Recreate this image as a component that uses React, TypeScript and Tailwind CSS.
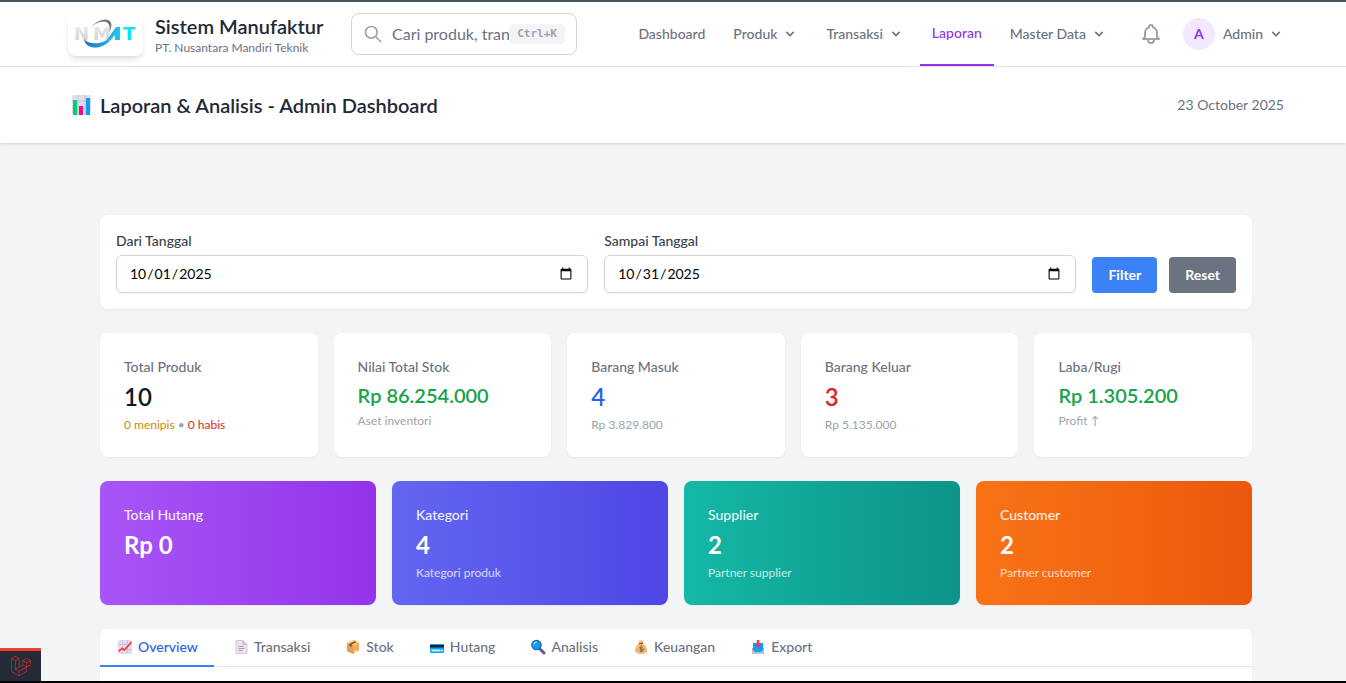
import type { ReactNode } from 'react';
import { SiLaravel } from 'react-icons/si';

function Chevron() {
  return (
    <svg className="size-4" viewBox="0 0 20 20" fill="currentColor" aria-hidden="true">
      <path
        fillRule="evenodd"
        clipRule="evenodd"
        d="M5.293 7.293a1 1 0 011.414 0L10 10.586l3.293-3.293a1 1 0 111.414 1.414l-4 4a1 1 0 01-1.414 0l-4-4a1 1 0 010-1.414z"
      />
    </svg>
  );
}

function Logo() {
  return (
    <svg className="h-8 w-16" viewBox="0 0 64 32" role="img" aria-label="NMT">
      <defs>
        <linearGradient id="silver" x1="0" y1="0" x2="0" y2="1">
          <stop offset="0" stopColor="#f1f1f2" />
          <stop offset="0.5" stopColor="#dadbdd" />
          <stop offset="1" stopColor="#cfd0d3" />
        </linearGradient>
        <linearGradient id="cyan" x1="0" y1="0" x2="0" y2="1">
          <stop offset="0" stopColor="#04ecf8" />
          <stop offset="1" stopColor="#0adcf4" />
        </linearGradient>
        <linearGradient id="blade" x1="0" y1="0" x2="1" y2="0">
          <stop offset="0" stopColor="#2c9fdc" />
          <stop offset="1" stopColor="#14cdf0" />
        </linearGradient>
        <linearGradient id="ringTop" x1="0" y1="1" x2="1" y2="0">
          <stop offset="0" stopColor="#d8d8da" />
          <stop offset="0.5" stopColor="#a4a5a8" />
          <stop offset="1" stopColor="#55575b" />
        </linearGradient>
        <linearGradient id="ringBottom" x1="0" y1="0" x2="1" y2="0">
          <stop offset="0" stopColor="#1c6fb8" />
          <stop offset="0.5" stopColor="#2497dc" />
          <stop offset="1" stopColor="#23c3ec" />
        </linearGradient>
      </defs>
      <g fontFamily="DejaVu Sans, sans-serif" fontSize="18" fontWeight="700">
        <text x="0" y="22" fill="url(#silver)">N</text>
        <text x="19" y="22" fill="url(#silver)">M</text>
        <text x="49" y="22" fill="url(#cyan)">T</text>
      </g>
      <path d="M16 11C20 4 29 0 34 2c5 2 4 8 1 13 1-5 1-9-3-11-5-1-11 1-16 7z" fill="url(#ringTop)" />
      <path d="M42 9h4v13h-5v-5l-5 5h-3z" fill="url(#blade)" />
      <path d="M10 21c1 7 8 10 16 8 7-2 13-8 16-16-5 7-11 11-17 12-6 1-12 0-15-4z" fill="url(#ringBottom)" />
    </svg>
  );
}

function BarChartIcon() {
  return (
    <svg className="h-5 w-[27px]" viewBox="0 0 27 20" aria-hidden="true">
      <rect x="4" y="0" width="19" height="20" rx="2" fill="#e5dcee" />
      <path d="M10 0v20M17 0v20M4 6h19M4 13h19" stroke="#c9bcd8" strokeWidth="1" />
      <rect x="5" y="5" width="4" height="15" fill="#00d26a" />
      <rect x="11" y="11" width="4" height="9" fill="#f70a8d" />
      <rect x="18" y="3" width="4" height="17" fill="#00a6ed" />
    </svg>
  );
}

function TabIcon({ children }: { children: ReactNode }) {
  return (
    <svg className="h-4 w-[18px]" viewBox="0 0 18 16" aria-hidden="true">
      {children}
    </svg>
  );
}

const tabs = [
  {
    label: 'Overview',
    icon: (
      <TabIcon>
        <rect x="2" y="1" width="14" height="14" rx="1.500" fill="#e4dcec" />
        <path d="M6.500 1v14M11.500 1v14M2 5.500h14M2 10.500h14" stroke="#c8bcd5" strokeWidth="0.800" />
        <path d="M2.500 12.500L6 9.500l2.500 1.500 7-8" stroke="#f8312f" strokeWidth="1.500" fill="none" />
      </TabIcon>
    ),
  },
  {
    label: 'Transaksi',
    icon: (
      <TabIcon>
        <path d="M4 1.500h7l4 4v9H4z" fill="#e9e2f0" stroke="#d3c9de" />
        <path d="M11 1.500v4h4" fill="#cbbfd9" stroke="#c2b6cf" />
        <path d="M6.500 7.500h5M6.500 9.500h6M6.500 11.500h4" stroke="#a79cb3" />
      </TabIcon>
    ),
  },
  {
    label: 'Stok',
    icon: (
      <TabIcon>
        <path d="M3 4l7-3 5 2.500v8L9 15l-6-3z" fill="#f3ad61" />
        <path d="M3 4l7-3 5 2.500-6 3z" fill="#ffce7c" />
        <path d="M3 4l6 2.500V15l-6-3z" fill="#e39d55" />
        <path d="M5.500 4.800l5.500-2.600 1.500.8-5 2.600v2.400l-2-1z" fill="#7d4533" />
        <path d="M10.500 12l2-1v2l-2 1z" fill="#ffe9bb" />
      </TabIcon>
    ),
  },
  {
    label: 'Hutang',
    icon: (
      <TabIcon>
        <rect x="2" y="5" width="14" height="9" rx="1" fill="#00a6ed" />
        <path d="M2 6h14v2.500H2z" fill="#1c1c32" />
        <path d="M3.500 10.500h9v2h-9z" fill="#d3e9f4" />
        <circle cx="14" cy="11.500" r="1" fill="#f4f4f4" />
      </TabIcon>
    ),
  },
  {
    label: 'Analisis',
    icon: (
      <TabIcon>
        <path d="M10.500 9.500l4.500 4.500" stroke="#635994" strokeWidth="3" strokeLinecap="round" />
        <circle cx="7.500" cy="6" r="4.700" fill="#00a6ed" stroke="#4056a5" strokeWidth="1.200" />
        <path d="M5 5q.5-2 2.500-2" stroke="#a7e2ff" strokeWidth="1.200" fill="none" strokeLinecap="round" />
      </TabIcon>
    ),
  },
  {
    label: 'Keuangan',
    icon: (
      <TabIcon>
        <path d="M6 1.500l2 .5 1-1 1 1 2-.5-1.500 3h-3z" fill="#f6ba6b" />
        <path d="M7 4.500h4c3 2 4 5 4 7s-2 3.500-6 3.500-6-1.500-6-3.500 1-5 4-7z" fill="#f3b86e" />
        <path d="M7 4.500h4" stroke="#8c5543" strokeWidth="1.200" />
        <path d="M10.700 8.200q-3-1.200-3 .5t3 1.500-.5 1.900q-1.200.4-2.700-.5M9 6.800v6.400" stroke="#8c5543" fill="none" />
      </TabIcon>
    ),
  },
  {
    label: 'Export',
    icon: (
      <TabIcon>
        <path d="M3 9h12v5.500H3z" fill="#b4acbc" />
        <path d="M4 4h10v7l-2 2H6l-2-2z" fill="#00a6ed" />
        <path d="M3 10.500l3 2.500h6l3-2.500V15H3z" fill="#c4bdcb" />
        <path d="M7.700 1h2.600v4.500h2L9 9 5.700 5.500h2z" fill="#f8315f" />
      </TabIcon>
    ),
  },
];

const stats = [
  {
    label: 'Total Produk',
    value: '10',
    size: 'text-2xl',
    color: 'text-gray-900',
    note: (
      <>
        <span className="text-[#ca8a04]">0 menipis</span> • <span className="text-[#dc2626]">0 habis</span>
      </>
    ),
  },
  { label: 'Nilai Total Stok', value: 'Rp 86.254.000', size: 'text-xl', color: 'text-[#16a34a]', note: 'Aset inventori' },
  { label: 'Barang Masuk', value: '4', size: 'text-2xl', color: 'text-[#2563eb]', note: 'Rp 3.829.800' },
  { label: 'Barang Keluar', value: '3', size: 'text-2xl', color: 'text-[#dc2626]', note: 'Rp 5.135.000' },
  { label: 'Laba/Rugi', value: 'Rp 1.305.200', size: 'text-xl', color: 'text-[#16a34a]', note: 'Profit ↑' },
];

const totals = [
  { label: 'Total Hutang', value: 'Rp 0', note: '', fill: 'from-[#a855f7] to-[#9333ea]' },
  { label: 'Kategori', value: '4', note: 'Kategori produk', fill: 'from-[#6366f1] to-[#4f46e5]' },
  { label: 'Supplier', value: '2', note: 'Partner supplier', fill: 'from-[#14b8a6] to-[#0d9488]' },
  { label: 'Customer', value: '2', note: 'Partner customer', fill: 'from-[#f97316] to-[#ea580c]' },
];

function NavMenu({ label }: { label: string }) {
  return (
    <button type="button" className="flex items-center gap-[5px] px-3 font-medium">
      {label}
      <Chevron />
    </button>
  );
}

function DateField({ id, label, value }: { id: string; label: string; value: string }) {
  return (
    <div className="flex-1">
      <label htmlFor={id} className="mb-1 block font-medium text-[#374151]">
        {label}
      </label>
      <input
        id={id}
        type="date"
        defaultValue={value}
        className="block h-[38px] w-full rounded-md border border-[#d1d5db] bg-white px-3 text-black shadow-xs"
      />
    </div>
  );
}

export default function App() {
  return (
    <div className="flex h-screen flex-col overflow-hidden border-t-2 border-b-2 border-t-[#475863] border-b-black bg-[#f3f4f6] font-['Lato',sans-serif] text-sm text-[#6b7280]">
      <nav className="shrink-0 border-b border-[#e5e7eb] bg-white pl-1.5">
        <div className="mx-auto flex h-16 max-w-7xl justify-between px-8">
          <div className="flex items-center">
            <a href="#home" className="flex items-center gap-3">
              <span className="flex h-11 w-[75px] items-center justify-center rounded-lg bg-white shadow-md">
                <Logo />
              </span>
              <span className="flex w-[172px] flex-col whitespace-nowrap">
                <span className="text-xl leading-7 font-semibold text-[#1f2937]">Sistem Manufaktur</span>
                <span className="text-xs">PT. Nusantara Mandiri Teknik</span>
              </span>
            </a>
            <div className="relative ml-6 w-[226px]">
              <svg
                className="absolute top-[11px] left-3 size-5 text-[#9ca3af]"
                viewBox="0 0 24 24"
                fill="none"
                stroke="currentColor"
                strokeWidth="2"
                strokeLinecap="round"
                aria-hidden="true"
              >
                <path d="M21 21l-6-6m2-5a7 7 0 11-14 0 7 7 0 0114 0z" />
              </svg>
              <input
                type="text"
                aria-label="Cari"
                placeholder="Cari produk, transaksi..."
                className="block h-[42px] w-full rounded-lg border border-[#d1d5db] bg-white pr-4 pb-0.5 pl-10 text-base placeholder:text-[#6b7280]"
              />
              <kbd className="absolute top-[11px] right-3 rounded bg-[#f3f4f6] px-2 font-['DejaVu_Sans_Mono',monospace] text-[11px] leading-5 font-semibold text-[#9ca3af]">
                Ctrl+K
              </kbd>
            </div>
          </div>

          <div className="flex items-stretch">
            <div className="flex gap-1">
              <a href="#dashboard" className="flex items-center px-3 font-medium">
                Dashboard
              </a>
              <NavMenu label="Produk" />
              <NavMenu label="Transaksi" />
              <a
                href="#laporan"
                className="flex items-center border-b-2 border-[#9333ea] px-3 font-medium text-[#9333ea]"
              >
                Laporan
              </a>
              <NavMenu label="Master Data" />
            </div>
            <button type="button" aria-label="Notifikasi" className="ml-5 text-[#9ca3af]">
              <svg
                className="size-6"
                viewBox="0 0 24 24"
                fill="none"
                stroke="currentColor"
                strokeWidth="2"
                strokeLinecap="round"
                strokeLinejoin="round"
              >
                <path d="M15 17h5l-1.405-1.405A2.032 2.032 0 0118 14.158V11a6.002 6.002 0 00-4-5.659V5a2 2 0 10-4 0v.341C7.670 6.165 6 8.388 6 11v3.159c0 .538-.214 1.055-.595 1.436L4 17h5m6 0v1a3 3 0 11-6 0v-1m6 0H9" />
              </svg>
            </button>
            <button type="button" className="ml-5 flex items-center gap-2 font-medium">
              <span className="flex size-8 items-center justify-center rounded-full bg-[#f3e8ff] font-bold text-[#9333ea]">
                A
              </span>
              <span className="flex items-center gap-[5px]">
                Admin
                <Chevron />
              </span>
            </button>
          </div>
        </div>
      </nav>

      <header className="shrink-0 bg-white pl-1.5 shadow-sm">
        <div className="mx-auto flex max-w-7xl items-center justify-between px-8 py-6">
          <h1 className="flex items-center gap-[5px] text-xl font-semibold text-[#1f2937]">
            <BarChartIcon />
            Laporan &amp; Analisis - Admin Dashboard
          </h1>
          <time dateTime="2025-10-23">23 October 2025</time>
        </div>
      </header>

      <main className="flex min-h-0 flex-1 flex-col pt-[72px] pl-1.5">
        <div className="mx-auto flex min-h-0 w-full max-w-7xl flex-1 flex-col gap-6 px-16">
          <form className="flex shrink-0 items-end gap-4 rounded-lg bg-white p-4 shadow-xs" onSubmit={(e) => e.preventDefault()}>
            <DateField id="start" label="Dari Tanggal" value="2025-10-01" />
            <DateField id="end" label="Sampai Tanggal" value="2025-10-31" />
            <div className="flex gap-3 font-bold text-white">
              <button type="submit" className="h-9 rounded-sm bg-[#3b82f6] px-4">
                Filter
              </button>
              <button type="reset" className="h-9 rounded-sm bg-[#6b7280] px-4">
                Reset
              </button>
            </div>
          </form>

          <section className="grid shrink-0 grid-cols-5 gap-4">
            {stats.map((s) => (
              <div key={s.label} className="flex h-[124px] flex-col gap-1 rounded-lg bg-white p-6 shadow-xs">
                <div className="font-medium">{s.label}</div>
                <div className={`${s.size} ${s.color} font-semibold`}>{s.value}</div>
                <div className="text-xs text-[#9ca3af]">{s.note}</div>
              </div>
            ))}
          </section>

          <section className="grid shrink-0 grid-cols-4 gap-4">
            {totals.map((t) => (
              <div
                key={t.label}
                className={`flex h-[124px] flex-col gap-1 rounded-lg bg-linear-to-r ${t.fill} p-6 text-white shadow-xs`}
              >
                <div className="font-medium opacity-90">{t.label}</div>
                <div className="text-2xl font-bold">{t.value}</div>
                <div className="text-xs opacity-75">{t.note}</div>
              </div>
            ))}
          </section>

          <section className="min-h-0 flex-1 rounded-t-lg bg-white shadow-xs">
            <div role="tablist" className="flex gap-0.5 border-b border-[#e5e7eb]">
              {tabs.map((t, i) => (
                <button
                  key={t.label}
                  type="button"
                  role="tab"
                  aria-selected={i === 0}
                  className={
                    i === 0
                      ? '-mb-px flex h-[38px] items-center gap-1 border-b-2 border-[#3b82f6] px-4 font-medium text-[#2563eb]'
                      : 'flex h-9 items-center gap-1 px-4 font-medium'
                  }
                >
                  {t.icon}
                  {t.label}
                </button>
              ))}
            </div>
          </section>
        </div>
      </main>

      <a
        href="#debugbar"
        aria-label="Laravel Debugbar"
        className="fixed bottom-0.5 left-0 flex h-[33px] w-[41px] items-center justify-center border-t-3 border-[#ef4030] bg-[#252a37] text-[#d9302c]"
      >
        <SiLaravel className="size-5" />
      </a>
    </div>
  );
}
